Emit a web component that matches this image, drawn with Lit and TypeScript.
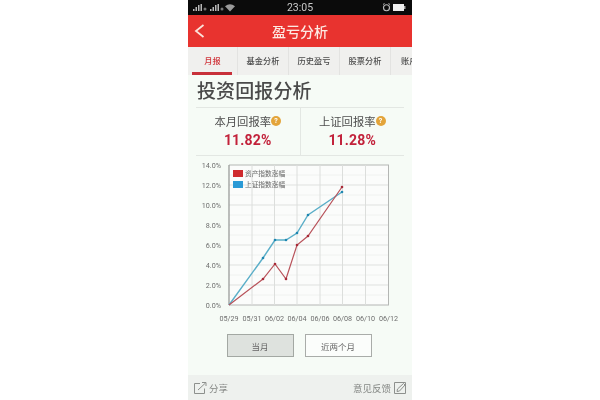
import { LitElement, html, css, svg } from "lit";
import { customElement } from "lit/decorators.js";

const X0 = 41, Y0 = 140;
const pts = (a: number[][]) => a.map(([x, y]) => `${x - 188},${y - 165}`).join(" ");
const red = [[229,305],[263,279],[275,264],[286,279],[297,245],[308,236],[342,187]];
const blue = [[229,305],[263,258],[275,240],[286,240],[297,233],[308,215],[342,192]];
const xs = [229,252,274.5,297,320,342.5,365.5,388.5];
const ys = [0,2,4,6,8,10,12,14];
const dates = ["05/29","05/31","06/02","06/04","06/06","06/08","06/10","06/12"];

@customElement("app-root")
export class AppRoot extends LitElement {
  static styles = css`
    :host { display: block; width: 600px; height: 400px; background: #fff; overflow: hidden;
      font-family: "Noto Sans CJK SC", "Roboto", sans-serif; }
    .phone { width: 224px; height: 400px; margin: 0 auto; display: flex; flex-direction: column; background: #f6fbf6; filter: blur(0.45px); }
    .status { height: 15px; background: #0b0b0b; color: #c9c9c9; display: flex; align-items: center; justify-content: space-between; padding: 0 6px 0 5px; flex: none; position: relative; }
    .status .time { position: absolute; left: 0; right: 0; text-align: center; font: 10.5px "Roboto", sans-serif; }
    .status svg { display: block; }
    .head { height: 32px; background: #e8332f; color: #fde9e2; flex: none; display: flex; align-items: center; justify-content: center; position: relative; font-size: 14px; font-weight: 500; }
    .back { position: absolute; left: 6px; top: 9px; }
    .tabs { height: 28px; flex: none; background: #f0f0ee; display: flex; overflow: hidden; font-size: 8.2px; font-weight: 500; color: #4c4c4c; }
    .tab { flex: none; width: 51px; display: flex; align-items: center; justify-content: center; border-right: 1px solid #e3e3e1; box-sizing: border-box; padding-bottom: 2px; position: relative; }
    .tab.first { width: 50px; color: #d0343a; }
    .tab.first::after { content: ""; position: absolute; left: 4px; right: 5px; bottom: 0; height: 3px; background: #c8313a; }
    .tab.last { border: 0; justify-content: flex-start; padding-left: 10px; width: 40px; }
    h1 { margin: 0; font-weight: 500; font-size: 19px; line-height: 27px; color: #4a4a4a; padding: 1px 0 0 9px; flex: none; height: 27px; letter-spacing: 0.1px; }
    .stats { margin: 4px 8px 0; border-top: 1px solid #e3e7e3; border-bottom: 1px solid #e3e7e3; height: 47px; display: flex; flex: none; }
    .stat { flex: 1; display: flex; flex-direction: column; align-items: center; padding-top: 5px; box-sizing: border-box; }
    .stat + .stat { border-left: 1px solid #e3e7e3; }
    .lab { font-size: 11.3px; line-height: 16px; color: #4f4f4f; display: flex; align-items: center; }
    .q { width: 10px; height: 10px; border-radius: 50%; background: #e3a43a; color: #fff; font: 700 7px/10px "Roboto", sans-serif; text-align: center; }
    .val { font: 700 14px/20px "Roboto", sans-serif; color: #c2213a; letter-spacing: 0.2px; margin-top: 1px; }
    .chart { flex: none; height: 161px; margin-top: 8px; }
    .chart svg { display: block; overflow: visible; }
    .chart text { font-family: "Roboto", sans-serif; font-size: 7.2px; fill: #6e6e6e; }
    .chart text.cn { font-family: "Noto Sans CJK SC", sans-serif; font-size: 6.7px; fill: #666; }
    .btns { display: flex; justify-content: center; gap: 11px; margin-top: 9px; flex: none; padding-right: 2px; }
    .btn { width: 67px; height: 23px; box-sizing: border-box; border: 1px solid #a9aca9; font-size: 8.5px; color: #666; display: flex; align-items: center; justify-content: center; background: #fbfdfb; }
    .btn.on { background: #dee2de; border-color: #a3a8a3; }
    .foot { margin-top: auto; height: 25px; background: #eef1ee; flex: none; display: flex; align-items: center; justify-content: space-between; padding: 0 5px; font-size: 9.5px; color: #858885; }
    .foot span { display: flex; align-items: center; gap: 2px; }
  `;

  chart() {
    return html`<svg width="224" height="161" viewBox="0 0 224 161">
      <g transform="translate(0,1)">
        <rect x=${X0} y="0" width="160" height=${Y0} fill="#fbfcfb" />
        ${ys.map((v) => { const y = Y0 - v * 10; return svg`
          <line x1=${X0} x2=${X0 + 160} y1=${y} y2=${y} stroke=${v === 0 || v === 14 ? "#b4b6b4" : "#dfe1df"} />
          ${v > 0 && v < 14 ? svg`<line x1=${X0} x2=${X0 + 160} y1=${y - 10} y2=${y - 10} stroke="#f0f2f0" />` : ""}
          <text x="33" y=${y + 2.5} text-anchor="end">${v.toFixed(1)}%</text>`; })}
        <line x1=${X0} x2=${X0 + 160} y1="130" y2="130" stroke="#f0f2f0" />
        ${xs.map((x, i) => svg`
          <line x1=${x - 188} x2=${x - 188} y1="0" y2=${Y0} stroke=${i === 0 ? "#9a9c9a" : i === 7 ? "#b4b6b4" : "#dcdedc"} stroke-width=${i === 0 ? 1.3 : 1} />
          <text x=${x - 188} y="156" text-anchor="middle">${dates[i]}</text>`)}
        <polyline points=${pts(blue)} fill="none" stroke="#5aaec8" stroke-width="1.4" />
        <polyline points=${pts(red)} fill="none" stroke="#b8525a" stroke-width="1.2" />
        ${blue.slice(1).map(([x, y]) => svg`<circle cx=${x - 188} cy=${y - 165} r="1.3" fill="#1f86b0" />`)}
        ${red.slice(1).map(([x, y]) => svg`<circle cx=${x - 188} cy=${y - 165} r="1.3" fill="#a82a38" />`)}
        <rect x="45" y="5" width="10" height="7" fill="#cf2a2e" />
        <rect x="45" y="16" width="10" height="7" fill="#2a9ad6" />
        <text class="cn" x="57" y="11">资产指数涨幅</text>
        <text class="cn" x="57" y="22">上证指数涨幅</text>
      </g>
    </svg>`;
  }

  render() {
    return html`<div class="phone">
      <div class="status">
        <svg width="44" height="9" viewBox="0 0 44 9" fill="#b8b8b8">
          <rect x="0" y="6" width="1.5" height="2"/><rect x="2.5" y="4" width="1.5" height="4"/><rect x="5" y="2" width="1.5" height="6"/><rect x="7.5" y="1" width="1.5" height="7"/>
          <circle cx="12" cy="6" r="1.5" fill="#777"/>
          <rect x="17" y="6" width="1.5" height="2"/><rect x="19.5" y="4" width="1.5" height="4"/><rect x="22" y="2" width="1.5" height="6"/><rect x="24.5" y="1" width="1.5" height="7"/>
          <circle cx="29" cy="6" r="1.5" fill="#777"/>
          <path d="M32 3.2 Q37 -0.8 42 3.2 L37 8.6Z" fill="#9a9a9a"/>
        </svg>
        <span class="time">23:05</span>
        <svg width="24" height="9" viewBox="0 0 24 9">
          <circle cx="4.5" cy="4.7" r="3" fill="none" stroke="#bbb" stroke-width="1.1"/>
          <path d="M1 1.5 L2.5 0.5 M8 1.5 L6.5 0.5" stroke="#bbb"/>
          <rect x="11" y="1" width="11" height="7" fill="#eee"/><rect x="22" y="3" width="1.5" height="3" fill="#aaa"/>
        </svg>
      </div>
      <div class="head">
        <svg class="back" width="11" height="14" viewBox="0 0 11 14"><path d="M9.5 1 L2 7 L9.5 13" fill="none" stroke="#fbe3da" stroke-width="1.8"/></svg>
        盈亏分析
      </div>
      <div class="tabs">
        <div class="tab first">月报</div><div class="tab">基金分析</div><div class="tab">历史盈亏</div><div class="tab">股票分析</div><div class="tab last">账户</div>
      </div>
      <h1>投资回报分析</h1>
      <div class="stats">
        <div class="stat"><div class="lab">本月回报率<span class="q">?</span></div><div class="val">11.82%</div></div>
        <div class="stat"><div class="lab">上证回报率<span class="q">?</span></div><div class="val">11.28%</div></div>
      </div>
      <div class="chart">${this.chart()}</div>
      <div class="btns"><div class="btn on">当月</div><div class="btn">近两个月</div></div>
      <div class="foot">
        <span><svg width="14" height="14" viewBox="0 0 14 14" fill="none" stroke="#8d908d"><path d="M7 2.5H1.5V12.5H11.5V7.5"/><path d="M5 9 L12.5 2 M9 1.5 H13 V5"/></svg>分享</span>
        <span>意见反馈<svg width="14" height="14" viewBox="0 0 14 14" fill="none" stroke="#8d908d"><path d="M1.5 1.5H12.5V12.5H1.5Z"/><path d="M4 10.5 L4.5 8 L10.5 2.5 L12 4 L6.5 10Z"/></svg></span>
      </div>
    </div>`;
  }
}
